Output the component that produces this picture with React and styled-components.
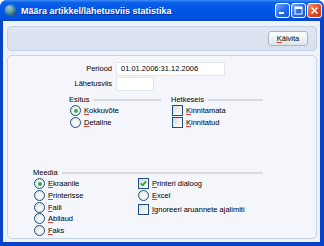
import React from 'react';
import styled, { createGlobalStyle } from 'styled-components';

const GlobalStyle = createGlobalStyle`
  html, body {
    margin: 0;
    padding: 0;
    background: #ffffff;
  }
  body {
    font-family: "Liberation Sans", Arial, sans-serif;
  }
`;

const Window = styled.div`
  width: 324px;
  height: 246px;
  box-sizing: border-box;
  display: flex;
  flex-direction: column;
  background: #0842c8;
  border-radius: 7px 7px 0 0;
  overflow: hidden;
`;

const TitleBar = styled.div`
  height: 21px;
  flex: none;
  display: flex;
  align-items: center;
  padding: 0 2px 0 4px;
  background: linear-gradient(#3d8df5 0%, #0b61ea 12%, #0055e5 50%, #0052e0 85%, #0343c7 100%);
`;

const TitleText = styled.div`
  flex: 1;
  margin-left: 4px;
  color: #ffffff;
  font-weight: bold;
  font-size: 9px;
  text-shadow: 1px 1px 0 #0a2a8a;
  white-space: nowrap;
`;

const Caption = styled.div`
  display: flex;
  gap: 1px;
`;

const CapButton = styled.div`
  width: 15px;
  height: 15px;
  box-sizing: border-box;
  border: 1px solid #ffffff;
  border-radius: 3px;
  background: ${(p) =>
    p.$close
      ? 'linear-gradient(135deg, #f19a7a, #e1502a 50%, #c4361a)'
      : 'linear-gradient(135deg, #78a8f8, #2a6df0 50%, #1a56d8)'};
  display: flex;
  align-items: center;
  justify-content: center;
`;

const Client = styled.div`
  flex: 1;
  margin: 0 4px 4px 3px;
  background: #eef2f9;
  display: flex;
  flex-direction: column;
  gap: 4px;
  padding: 5px 3px 3px 4px;
  box-sizing: border-box;
`;

const Toolbar = styled.div`
  height: 25px;
  flex: none;
  box-sizing: border-box;
  border: 1px solid #c3d0e6;
  border-radius: 4px;
  background: linear-gradient(#dfe6f2, #d8e1ef);
  display: flex;
  justify-content: flex-end;
  align-items: center;
  padding-right: 8px;
`;

const Button = styled.div`
  width: 40px;
  height: 15px;
  box-sizing: border-box;
  border: 1px solid #a9b6c9;
  border-radius: 3px;
  background: linear-gradient(#ffffff, #eef0f4 60%, #dde2ea);
  font-size: 7.5px;
  color: #000;
  display: flex;
  align-items: center;
  justify-content: center;
`;

const Panel = styled.div`
  flex: 1;
  box-sizing: border-box;
  border: 1px solid #c5d2e8;
  border-radius: 5px;
  background: #f4f6fb;
  padding: 5px 0 2px 0;
  display: flex;
  flex-direction: column;
  justify-content: space-between;
`;

const Section = styled.div`
  display: flex;
  flex-direction: column;
`;

const FormRow = styled.div`
  display: grid;
  grid-template-columns: 104px auto;
  column-gap: 4px;
  align-items: center;
  height: 15px;
`;

const Label = styled.div`
  text-align: right;
  font-size: 7.5px;
  color: #000;
`;

const Field = styled.div`
  width: ${(p) => p.$w}px;
  height: 14px;
  box-sizing: border-box;
  background: #ffffff;
  border: 1px solid #e2e6ee;
  font-size: 7.5px;
  padding-left: 4px;
  display: flex;
  align-items: center;
  color: #000;
`;

const Groups = styled.div`
  display: flex;
  margin-top: ${(p) => p.$top || 0}px;
  padding-left: ${(p) => p.$left}px;
  gap: 10px;
`;

const Group = styled.div`
  width: ${(p) => p.$w}px;
  display: flex;
  flex-direction: column;
`;

const GroupTitle = styled.div`
  display: flex;
  align-items: center;
  gap: 4px;
  font-size: 7.5px;
  color: #000;
  height: 10px;
  &::after {
    content: '';
    flex: 1;
    height: 0;
    border-top: 2px solid #d8dce4;
    margin-top: 1px;
  }
`;

const Options = styled.div`
  display: grid;
  grid-template-columns: ${(p) => p.$cols || '1fr'};
  grid-auto-flow: column;
  grid-template-rows: repeat(${(p) => p.$rows || 2}, 11.6px);
  margin-top: 1px;
`;

const Option = styled.div`
  display: flex;
  align-items: center;
  gap: 3px;
  font-size: 7.5px;
  color: #000;
  padding-left: 1px;
  white-space: nowrap;
  ${(p) => (p.$shift ? `transform: translateY(${p.$shift}px);` : '')}
`;

const RadioCircle = styled.span`
  width: 11px;
  height: 11px;
  flex: none;
  box-sizing: border-box;
  border: 1px solid #1e4f84;
  border-radius: 50%;
  background: radial-gradient(circle at 60% 60%, #ffffff, #dcdcd6);
  display: flex;
  align-items: center;
  justify-content: center;
  &::after {
    content: '';
    width: 4px;
    height: 4px;
    border-radius: 50%;
    background: ${(p) => (p.$on ? '#2fb13a' : 'transparent')};
  }
`;

const CheckBox = styled.span`
  width: 11px;
  height: 11px;
  flex: none;
  box-sizing: border-box;
  border: 1px solid #1e4f84;
  background: linear-gradient(135deg, #dcdcd6, #ffffff);
  display: flex;
  align-items: center;
  justify-content: center;
`;

const Mnemonic = styled.span`
  text-decoration: underline;
  text-decoration-color: #e0403a;
`;

const Hot = ({ text }) => (
  <span>
    <Mnemonic>{text[0]}</Mnemonic>
    {text.slice(1)}
  </span>
);

const Radio = ({ on, text, shift }) => (
  <Option $shift={shift}>
    <RadioCircle $on={on} />
    <Hot text={text} />
  </Option>
);

const Check = ({ on, text, shift }) => (
  <Option $shift={shift}>
    <CheckBox>
      {on && (
        <svg width="7" height="7" viewBox="0 0 7 7">
          <path d="M0.8 3.4 L2.7 5.3 L6.2 1.2" stroke="#21a121" strokeWidth="1.6" fill="none" />
        </svg>
      )}
    </CheckBox>
    <Hot text={text} />
  </Option>
);

const AppIcon = () => (
  <svg width="13" height="13" viewBox="0 0 13 13">
    <defs>
      <radialGradient id="globe" cx="0.4" cy="0.35" r="0.7">
        <stop offset="0" stopColor="#c6e4f0" />
        <stop offset="0.5" stopColor="#4b8fb0" />
        <stop offset="1" stopColor="#1d4a6a" />
      </radialGradient>
    </defs>
    <circle cx="6.5" cy="6.5" r="6" fill="url(#globe)" />
    <path d="M2.5 5 Q6 3 10 6 Q7 8 3 8 Z" fill="#6fae8a" opacity="0.7" />
  </svg>
);

const App = () => (
  <>
    <GlobalStyle />
    <Window>
      <TitleBar>
        <AppIcon />
        <TitleText>Määra artikkel/lähetusviis statistika</TitleText>
        <Caption>
          <CapButton>
            <svg width="9" height="9" viewBox="0 0 9 9">
              <rect x="1" y="6" width="5" height="2" fill="#fff" />
            </svg>
          </CapButton>
          <CapButton>
            <svg width="9" height="9" viewBox="0 0 9 9">
              <rect x="1" y="1" width="7" height="7" fill="none" stroke="#fff" strokeWidth="1" />
              <rect x="1" y="1" width="7" height="2" fill="#fff" />
            </svg>
          </CapButton>
          <CapButton $close>
            <svg width="9" height="9" viewBox="0 0 9 9">
              <path d="M1.5 1.5 L7.5 7.5 M7.5 1.5 L1.5 7.5" stroke="#fff" strokeWidth="1.6" />
            </svg>
          </CapButton>
        </Caption>
      </TitleBar>
      <Client>
        <Toolbar>
          <Button>
            <Hot text="Käivita" />
          </Button>
        </Toolbar>
        <Panel>
          <Section>
            <FormRow>
              <Label>Periood</Label>
              <Field $w={109}>01.01.2006:31.12.2006</Field>
            </FormRow>
            <FormRow>
              <Label>Lähetusviis</Label>
              <Field $w={38} />
            </FormRow>
            <Groups $left={61} $top={3}>
              <Group $w={92}>
                <GroupTitle>Esitus</GroupTitle>
                <Options>
                  <Radio on text="Kokkuvõte" />
                  <Radio text="Detailne" />
                </Options>
              </Group>
              <Group $w={92}>
                <GroupTitle>Hetkeseis</GroupTitle>
                <Options>
                  <Check text="Kinnitamata" />
                  <Check text="Kinnitatud" />
                </Options>
              </Group>
            </Groups>
          </Section>
          <Groups $left={25}>
            <Group $w={230}>
              <GroupTitle>Meedia</GroupTitle>
              <Options $rows={5} $cols="104px 1fr">
                <Radio on text="Ekraanile" />
                <Radio text="Printerisse" />
                <Radio text="Faili" />
                <Radio text="Abilaud" />
                <Radio text="Faks" />
                <Check on text="Printeri dialoog" />
                <Radio text="Excel" />
                <Check text="Ignoreeri aruannete ajalimiti" shift={2} />
              </Options>
            </Group>
          </Groups>
        </Panel>
      </Client>
    </Window>
  </>
);

export default App;
